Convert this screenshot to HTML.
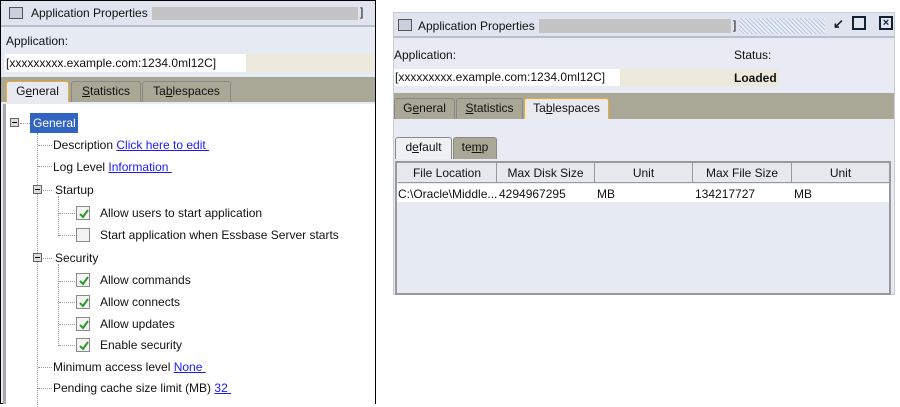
<!DOCTYPE html>
<html><head><style>
*{margin:0;padding:0;box-sizing:border-box}
body{width:900px;height:407px;background:#fff;position:relative;overflow:hidden;font-family:"Liberation Sans",Arial,sans-serif;font-size:12px;color:#111}
.a{position:absolute;white-space:nowrap}
.lnk{color:#1a1aff;text-decoration:underline}
.cb{position:absolute;width:14px;height:14px;border:1px solid #8a8a8a;background:#f4f4f4}
.cb svg{position:absolute;left:1px;top:1px}
.dv{position:absolute;border-left:1px dotted #999}
.dh{position:absolute;border-top:1px dotted #999}
.pm{position:absolute;width:9px;height:9px;border:1px solid #666;background:#ddd}
.pm:after{content:"";position:absolute;left:1px;top:3px;width:5px;height:1px;background:#000}
.tab{position:absolute;height:21px;border:1px solid #888;border-bottom:none;background:#a9a795;font-size:12px;text-align:center;line-height:19px;border-radius:3px 3px 0 0}
.th{position:absolute;top:0;height:20px;border-right:1px solid #999;border-bottom:1px solid #999;background:#e6e8ee;text-align:center;line-height:20px}
</style></head><body>
<!-- LEFT PANEL -->
<div class="a" style="left:0;top:0;width:376px;height:404px;border:1px solid #000;background:#e6eaf3"></div>
<div class="a" style="left:1px;top:1px;width:374px;height:26px;background:#dfe4ee;border-bottom:2px solid #b8bfcc"></div>
<div class="a" style="left:9px;top:7px;width:14px;height:12px;border:1px solid #555;background:#c9d0dc"></div>
<div class="a" style="left:31px;top:6px;font-size:12px">Application Properties |</div>
<div class="a" style="left:152px;top:7px;width:206px;height:13px;background:#c4c4c4"></div>
<div class="a" style="left:360px;top:5px">]</div>
<div class="a" style="left:6px;top:34px">Application:</div>
<div class="a" style="left:5px;top:54px;width:369px;height:18px;background:#ece9dc"></div>
<div class="a" style="left:5px;top:54px;width:241px;height:18px;background:#fff"></div>
<div class="a" style="left:6px;top:56px">[xxxxxxxxx.example.com:1234.0ml12C]</div>
<div class="a" style="left:1px;top:77px;width:374px;height:25px;background:#a9a795"></div>
<div class="tab" style="left:6px;top:81px;width:63px;background:#e9eaef;border:1px solid #f0a830;border-bottom:none">G<u>e</u>neral</div>
<div class="tab" style="left:71px;top:81px;width:70px"><u>S</u>tatistics</div>
<div class="tab" style="left:142px;top:81px;width:89px">Ta<u>b</u>lespaces</div>
<div class="a" style="left:3px;top:104px;width:372px;height:300px;background:#fff;border-left:3px solid #aaa"></div>
<!-- tree -->
<div class="pm" style="left:10px;top:118px"></div>
<div class="dh" style="left:20px;top:123px;width:10px"></div>
<div class="a" style="left:30px;top:113px;width:48px;height:20px;background:#3163c0;color:#fff;line-height:20px;padding-left:3px">General</div>
<div class="dv" style="left:37px;top:133px;height:272px"></div>
<div class="dh" style="left:38px;top:145px;width:14px"></div>
<div class="a" style="left:53px;top:138px">Description <span class="lnk">Click here to edit&nbsp;</span></div>
<div class="dh" style="left:38px;top:166px;width:14px"></div>
<div class="a" style="left:53px;top:160px">Log Level <span class="lnk">Information&nbsp;</span></div>
<div class="pm" style="left:33px;top:185px"></div>
<div class="dh" style="left:43px;top:190px;width:9px"></div>
<div class="a" style="left:55px;top:183px">Startup</div>
<div class="dv" style="left:58px;top:196px;height:40px"></div>
<div class="dh" style="left:59px;top:213px;width:16px"></div>
<div class="dh" style="left:59px;top:235px;width:16px"></div>
<div class="cb" style="left:76px;top:206px"><svg width="12" height="12"><path d="M2 6 L5 9 L10 2" stroke="#2a9a2a" stroke-width="2" fill="none"/></svg></div>
<div class="a" style="left:100px;top:206px">Allow users to start application</div>
<div class="cb" style="left:76px;top:228px"></div>
<div class="a" style="left:100px;top:228px">Start application when Essbase Server starts</div>
<div class="pm" style="left:33px;top:253px"></div>
<div class="dh" style="left:43px;top:258px;width:9px"></div>
<div class="a" style="left:55px;top:251px">Security</div>
<div class="dv" style="left:58px;top:264px;height:82px"></div>
<div class="dh" style="left:59px;top:281px;width:16px"></div>
<div class="dh" style="left:59px;top:302px;width:16px"></div>
<div class="dh" style="left:59px;top:324px;width:16px"></div>
<div class="dh" style="left:59px;top:345px;width:16px"></div>
<div class="cb" style="left:76px;top:273px"><svg width="12" height="12"><path d="M2 6 L5 9 L10 2" stroke="#2a9a2a" stroke-width="2" fill="none"/></svg></div>
<div class="a" style="left:100px;top:273px">Allow commands</div>
<div class="cb" style="left:76px;top:295px"><svg width="12" height="12"><path d="M2 6 L5 9 L10 2" stroke="#2a9a2a" stroke-width="2" fill="none"/></svg></div>
<div class="a" style="left:100px;top:295px">Allow connects</div>
<div class="cb" style="left:76px;top:317px"><svg width="12" height="12"><path d="M2 6 L5 9 L10 2" stroke="#2a9a2a" stroke-width="2" fill="none"/></svg></div>
<div class="a" style="left:100px;top:317px">Allow updates</div>
<div class="cb" style="left:76px;top:338px"><svg width="12" height="12"><path d="M2 6 L5 9 L10 2" stroke="#2a9a2a" stroke-width="2" fill="none"/></svg></div>
<div class="a" style="left:100px;top:338px">Enable security</div>
<div class="dh" style="left:38px;top:367px;width:14px"></div>
<div class="a" style="left:53px;top:360px">Minimum access level <span class="lnk">None&nbsp;</span></div>
<div class="dh" style="left:38px;top:388px;width:14px"></div>
<div class="a" style="left:53px;top:381px">Pending cache size limit (MB) <span class="lnk">32&nbsp;</span></div>

<!-- RIGHT PANEL -->
<div class="a" style="left:393px;top:12px;width:502px;height:283px;background:#e8ebf3;border:1px solid #c8ccd4"></div>
<div class="a" style="left:394px;top:13px;width:500px;height:25px;background:#dfe4ee;border-bottom:2px solid #b8bfcc"></div>
<div class="a" style="left:398px;top:19px;width:14px;height:12px;border:1px solid #555;background:#c9d0dc"></div>
<div class="a" style="left:418px;top:19px">Application Properties |</div>
<div class="a" style="left:539px;top:19px;width:192px;height:14px;background:#c4c4c4"></div>
<div class="a" style="left:733px;top:18px">]</div>
<div class="a" style="left:739px;top:18px;width:86px;height:16px;background:repeating-linear-gradient(45deg,#b8c6e0 0 1px,#e8edf6 1px 3px)"></div>
<div class="a" style="left:833px;top:16px;font-size:13px;font-weight:bold;color:#123">&#8601;</div>
<div class="a" style="left:852px;top:16px;width:14px;height:14px;border:2px solid #123"></div>
<div class="a" style="left:879px;top:16px;width:14px;height:14px;border:2px solid #123;font-size:11px;line-height:10px;text-align:center;font-weight:bold;color:#123">×</div>
<div class="a" style="left:394px;top:48px">Application:</div>
<div class="a" style="left:734px;top:48px">Status:</div>
<div class="a" style="left:394px;top:69px;width:385px;height:17px;background:#ece9dc"></div>
<div class="a" style="left:394px;top:69px;width:226px;height:17px;background:#fff"></div>
<div class="a" style="left:395px;top:70px">[xxxxxxxxx.example.com:1234.0ml12C]</div>
<div class="a" style="left:734px;top:71px;font-weight:bold">Loaded</div>
<div class="a" style="left:394px;top:93px;width:500px;height:26px;background:#a9a795"></div>
<div class="tab" style="left:394px;top:98px;width:61px">G<u>e</u>neral</div>
<div class="tab" style="left:456px;top:98px;width:67px"><u>S</u>tatistics</div>
<div class="tab" style="left:524px;top:98px;width:85px;background:#e9eaef;border:1px solid #f0a830;border-bottom:none">Ta<u>b</u>lespaces</div>
<div class="tab" style="left:395px;top:137px;width:57px;background:#eef0f4;height:22px">d<u>e</u>fault</div>
<div class="tab" style="left:453px;top:137px;width:44px;height:22px">te<u>m</u>p</div>
<div class="a" style="left:395px;top:161px;width:496px;height:134px;border:2px solid #999;background:#e6eaf3">
 <div class="th" style="left:1px;width:99px">File Location</div>
 <div class="th" style="left:100px;width:98px">Max Disk Size</div>
 <div class="th" style="left:198px;width:98px">Unit</div>
 <div class="th" style="left:296px;width:99px">Max File Size</div>
 <div class="th" style="left:395px;width:98px">Unit</div>
 <div class="a" style="left:0;top:21px;width:492px;height:18px;background:#fff"></div>
 <div class="a" style="left:1px;top:24px">C:\Oracle\Middle...</div>
 <div class="a" style="left:102px;top:24px">4294967295</div>
 <div class="a" style="left:200px;top:24px">MB</div>
 <div class="a" style="left:298px;top:24px">134217727</div>
 <div class="a" style="left:397px;top:24px">MB</div>
</div>
</body></html>
